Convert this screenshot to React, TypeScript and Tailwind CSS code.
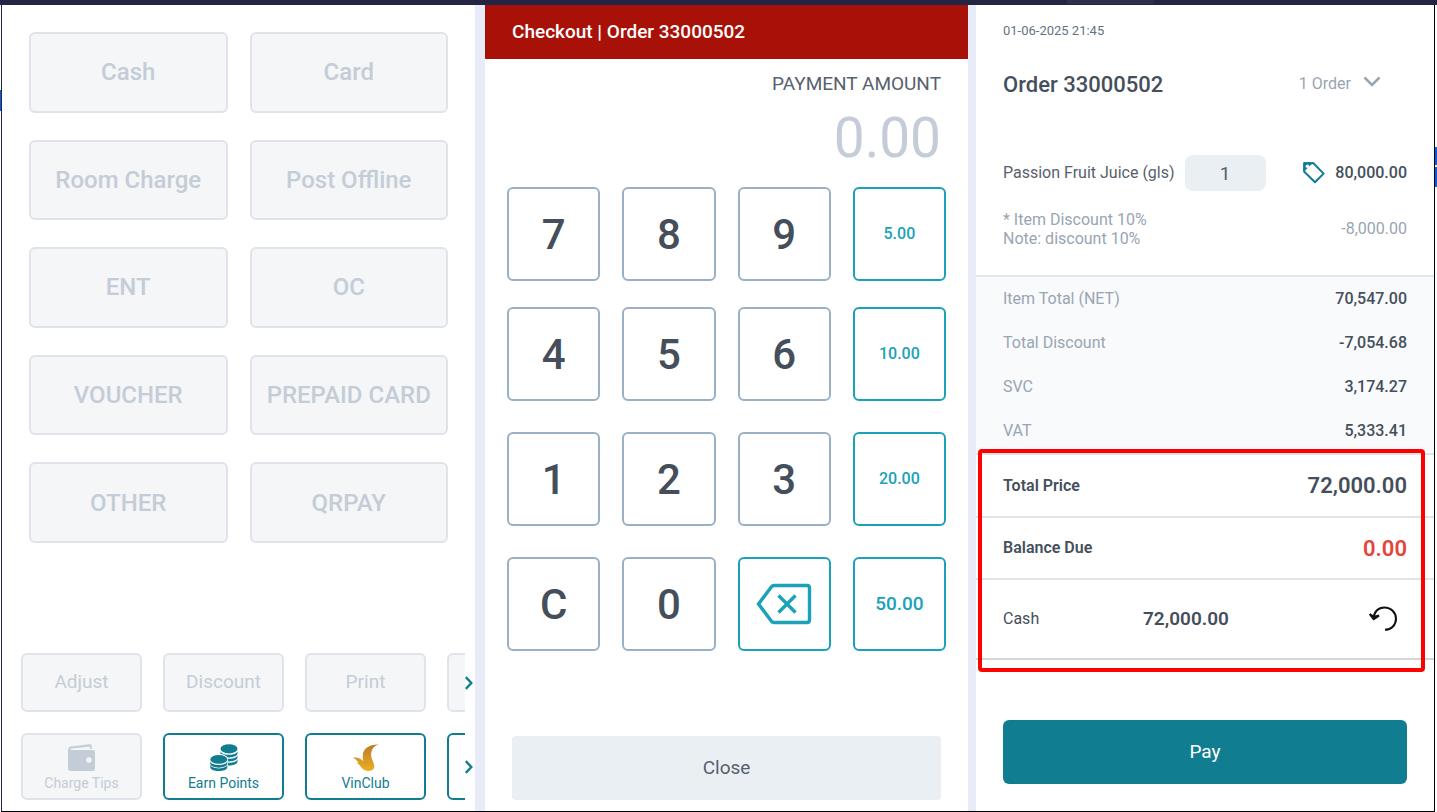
import type { ReactNode } from "react";

const tenders = [
  "Cash", "Card", "Room Charge", "Post Offline", "ENT",
  "OC", "VOUCHER", "PREPAID CARD", "OTHER", "QRPAY",
];

const totals = [
  ["Item Total (NET)", "70,547.00"],
  ["Total Discount", "-7,054.68"],
  ["SVC", "3,174.27"],
  ["VAT", "5,333.41"],
];

function WalletIcon() {
  return (
    <svg width="27" height="27" viewBox="0 0 27 27" fill="currentColor" aria-hidden="true">
      <path d="M0 6.200C0 4.200 1 3 3 2.600L21.200.2C22.800 0 23.700.8 23.700 2.300V5H22V3.900c0-.8-.6-1.200-1.400-1.100L3.500 4.600C2.400 4.800 2.400 6 3.500 6H24.700C26.200 6 27 6.800 27 8.300V24.500C27 26.200 26.200 27 24.500 27H2.800C1 27 0 26 0 24.200Z" />
      <circle cx="20.900" cy="16" r="2.800" fill="#f4f6f8" />
    </svg>
  );
}

function CoinsIcon() {
  const band = (x: number, y: number) => `M${x} ${y}c0 2.300 4 3.800 8.500 3.800s8.500-1.500 8.500-3.800v2.600c0 2.300-4 3.900-8.500 3.900s-8.500-1.600-8.500-3.900Z`;
  return (
    <svg width="28" height="27" viewBox="0 0 28 27" fill="currentColor" aria-hidden="true">
      <ellipse cx="19" cy="4.800" rx="8.500" ry="4.600" />
      <path d={band(10.5, 7)} />
      <path d={band(10.5, 11)} />
      <path d={band(10.5, 15)} />
      <path d="M-.6 15.500C-.6 12 3.500 10 8.800 10s9.200 2 9.200 5.500V28H-.6Z" fill="#fff" />
      <ellipse cx="8.800" cy="15.400" rx="8.500" ry="4.400" />
      <path d={band(0.3, 17.2)} />
      <path d={band(0.3, 20.6)} />
    </svg>
  );
}

function BirdIcon() {
  return (
    <svg width="27" height="27" viewBox="0 0 27 27" aria-hidden="true">
      <defs>
        <linearGradient id="gold" x1="0" y1="0" x2="0" y2="1">
          <stop offset="0" stopColor="#b97a2b" />
          <stop offset="1" stopColor="#efae20" />
        </linearGradient>
      </defs>
      <path fill="url(#gold)" d="M26.500.4C17 .3 11 4.500 10.700 11.500c0 2 .3 3.700.5 5.500C8.500 14.500 5 13.300.8 13.700c3 1 4.300 3.300 6 5.300-.9-.3-1.700-.4-2.600-.2 2.300.8 3.500 2.300 5 4.400 2 2.700 4.600 3.800 7.800 3.700 3.200-.1 5.400-1.700 5.300-4.600-.1-3.500-3.300-7-3.200-12 .1-4.600 2.600-8.300 7.400-9.900Z" />
    </svg>
  );
}

function ChevronRight() {
  return (
    <svg width="8" height="14" viewBox="0 0 8 14" fill="none" stroke="currentColor" strokeWidth="2.400" aria-hidden="true">
      <path d="M.8 1.200 6.300 7 .8 12.800" />
    </svg>
  );
}

function Strip({ label, children }: { label: string; children: ReactNode }) {
  return (
    <div className="flex">
      <div className="flex min-w-0 flex-1 gap-[21px] overflow-hidden">{children}</div>
      <button aria-label={label} className="w-[10px] shrink-0 text-[#117d91]">
        <ChevronRight />
      </button>
    </div>
  );
}

const disabledBox = "rounded-md border-2 border-[#e0e4ea] bg-[#f4f6f8] text-[#c4cdd7]";
const activeBox = "rounded-md border-2 border-[#117d91] bg-white text-[#117d91]";
const iconBox = "flex h-[67px] w-[121px] shrink-0 flex-col items-center justify-center gap-1 pt-[2px] text-sm leading-4";

function Tenders() {
  return (
    <section className="flex min-w-0 flex-col bg-white pt-[27px] pb-[11px]">
      <div className="grid h-[511px] grid-cols-2 grid-rows-5 gap-x-[22px] gap-y-[27px] px-[27px]">
        {tenders.map((name) => (
          <button key={name} disabled className={`${disabledBox} text-2xl font-medium whitespace-nowrap`}>
            {name}
          </button>
        ))}
      </div>
      <div className="mt-auto flex flex-col gap-[21px] pl-[19px]">
        <Strip label="Next actions">
          {["Adjust", "Discount", "Print"].map((name) => (
            <button key={name} disabled className={`${disabledBox} h-[59px] w-[121px] shrink-0 text-[19px]`}>
              {name}
            </button>
          ))}
          <button disabled aria-label="More actions" className={`${disabledBox} h-[59px] w-[121px] shrink-0`} />
        </Strip>
        <Strip label="Next services">
          <button disabled className={`${disabledBox} ${iconBox}`}>
            <WalletIcon />
            Charge Tips
          </button>
          <button className={`${activeBox} ${iconBox}`}>
            <CoinsIcon />
            Earn Points
          </button>
          <button className={`${activeBox} ${iconBox}`}>
            <BirdIcon />
            VinClub
          </button>
          <button aria-label="More services" className={`${activeBox} h-[67px] w-[121px] shrink-0`} />
        </Strip>
      </div>
    </section>
  );
}

function Digit({ children }: { children: string }) {
  return (
    <button className="h-[94px] rounded-md border-2 border-[#9ab1c5] text-[42px] font-medium text-[#454f5b]">
      {children}
    </button>
  );
}

function Amount({ children, large }: { children: ReactNode; large?: boolean }) {
  return (
    <button
      className={`flex h-[94px] items-center justify-center rounded-md border-2 border-[#1ba1b8] font-medium text-[#1ba1b8] ${large ? "text-[19px]" : "text-base"}`}
    >
      {children}
    </button>
  );
}

function Keypad() {
  return (
    <section className="flex min-w-0 flex-col border-r-8 border-l-[10px] border-[#e8ecf8] bg-white pb-[11px]">
      <h1 className="flex h-[54px] items-center bg-[#a81108] px-[27px] text-[19px] font-medium text-white">
        Checkout | Order 33000502
      </h1>
      <label htmlFor="amount" className="mt-3 px-[27px] text-right text-[19px] leading-[26px] text-[#57616d]">
        PAYMENT AMOUNT
      </label>
      <input
        id="amount"
        readOnly
        value="0.00"
        className="mt-2 mb-4 h-[66px] w-full px-[27px] text-right text-[55px] text-[#c4cdd7] outline-none"
      />
      <div className="grid grid-cols-4 gap-x-[22px] px-[22px]">
        <Digit>7</Digit>
        <Digit>8</Digit>
        <Digit>9</Digit>
        <Amount>5.00</Amount>
      </div>
      <div className="mt-[26px] grid grid-cols-4 gap-x-[22px] gap-y-[31px] px-[22px]">
        <Digit>4</Digit>
        <Digit>5</Digit>
        <Digit>6</Digit>
        <Amount>10.00</Amount>
        <Digit>1</Digit>
        <Digit>2</Digit>
        <Digit>3</Digit>
        <Amount>20.00</Amount>
        <Digit>C</Digit>
        <Digit>0</Digit>
        <Amount>
          <svg width="56" height="42" viewBox="0 0 56 42" fill="none" stroke="currentColor" strokeWidth="3.400" role="img" aria-label="Backspace">
            <path d="M18 2.500H51Q53.500 2.500 53.500 5V37Q53.500 39.500 51 39.500H18Q16.500 39.500 15.500 38.300L2.500 21 15.500 3.700Q16.500 2.500 18 2.500Z" />
            <path d="M22.500 12.500 39.500 29.500M39.500 12.500 22.500 29.500" />
          </svg>
        </Amount>
        <Amount large>50.00</Amount>
      </div>
      <button className="mx-[27px] mt-auto h-16 rounded bg-[#eaeff3] text-[19px] text-[#57616d]">Close</button>
    </section>
  );
}

function Receipt() {
  return (
    <section className="flex min-w-0 flex-col bg-white pb-[27px] text-[#454f5b]">
      <p className="mt-4 px-[27px] text-[13px] leading-5 text-[#637381]">01-06-2025 21:45</p>
      <div className="mt-[25px] flex h-9 items-center justify-between px-[27px]">
        <h2 className="text-[22px] font-medium">Order 33000502</h2>
        <button className="mr-[26px] flex items-center gap-3 text-base text-[#98a5b3]">
          1 Order
          <svg width="18" height="12" viewBox="0 0 18 12" fill="none" stroke="currentColor" strokeWidth="2.600" className="mb-1" aria-hidden="true">
            <path d="M1.500 1.500 9 9 16.500 1.500" />
          </svg>
        </button>
      </div>
      <div className="mt-[53px] flex h-9 items-center px-[27px]">
        <label htmlFor="qty" className="text-base whitespace-nowrap text-[#57616d]">Passion Fruit Juice (gls)</label>
        <input id="qty" defaultValue="1" className="ml-[10px] h-9 w-[81px] rounded-lg bg-[#eaeff3] text-center text-[19px] text-[#57616d]" />
        <svg width="22" height="22" viewBox="0 0 22 22" fill="none" stroke="#117d91" strokeWidth="2" className="ml-auto" aria-hidden="true">
          <path d="M1.300 1.300H10.500L20.600 11.600 12 20.300 1.300 9.800Z" strokeLinejoin="round" />
          <path d="M1.300 1.300H8L1.300 7.800Z" fill="#117d91" />
          <circle cx="4.400" cy="4.300" r="1.700" fill="#fff" stroke="none" />
        </svg>
        <span className="ml-[10px] text-base font-medium">80,000.00</span>
      </div>
      <div className="mt-[19px] flex items-center justify-between px-[27px] text-base text-[#98a5b3]">
        <p className="leading-[19px]">
          * Item Discount 10%
          <br />
          Note: discount 10%
        </p>
        <span>-8,000.00</span>
      </div>
      <div className="mt-[27px] border-t-2 border-[#e3e6ea] bg-[#f9fafb]">
        <table className="w-full text-base">
          <tbody>
            {totals.map(([name, value]) => (
              <tr key={name} className="h-11">
                <th className="pl-[27px] text-left font-normal text-[#98a5b3]">{name}</th>
                <td className="pr-[27px] text-right font-medium">{value}</td>
              </tr>
            ))}
          </tbody>
        </table>
      </div>
      <div className="relative">
        <dl>
          <div className="flex h-[65px] items-center justify-between border-t-2 border-b-2 border-[#e0e4e9] px-[27px]">
            <dt className="text-base font-semibold">Total Price</dt>
            <dd className="text-[22px] font-semibold">72,000.00</dd>
          </div>
          <div className="flex h-[62px] items-center justify-between border-b-2 border-[#e0e4e9] px-[27px]">
            <dt className="text-base font-semibold">Balance Due</dt>
            <dd className="text-[22px] font-semibold text-[#e5443d]">0.00</dd>
          </div>
          <div className="flex h-20 items-center border-b-2 border-[#d3d5d8] px-[27px]">
            <dt className="w-[140px] text-base">Cash</dt>
            <dd className="text-[19px] font-semibold">72,000.00</dd>
            <dd className="mr-[9px] ml-auto h-7">
              <button aria-label="Undo payment">
                <svg width="30" height="28" viewBox="0 0 30 28" fill="none" stroke="#111" strokeWidth="2.100">
                  <path d="M5.800 13C6 6.500 10.500 2.500 16.300 2.500 23 2.500 28 7.500 28 13.800S23 24.800 17 24.800" />
                  <path d="M1.800 9 5.700 14 11 10.500 5.900 12Z" fill="#111" />
                </svg>
              </button>
            </dd>
          </div>
        </dl>
        <div className="pointer-events-none absolute -top-1 right-[9px] -bottom-3 left-[2px] rounded-sm border-4 border-[#ff0000]" />
      </div>
      <button className="mx-[27px] mt-auto h-16 rounded-md bg-[#117d91] text-[19px] text-white">Pay</button>
    </section>
  );
}

export default function App() {
  return (
    <div className="flex min-h-screen flex-col bg-white font-[Roboto,sans-serif]">
      <header className="flex h-[5px] bg-[#232542] pl-[1067px]">
        <div className="h-1 w-[87px] bg-[#2e2f4e]" />
      </header>
      <div className="flex flex-1">
        <div className="w-px pt-[85px]">
          <div className="h-[21px] bg-[#0b5cd8]" />
        </div>
        <main className="grid min-w-0 flex-1 grid-cols-[473fr_501fr_458fr] border-r border-b border-l border-black border-l-[#232542]">
          <Tenders />
          <Keypad />
          <Receipt />
        </main>
        <div className="flex w-[2px] flex-col gap-[2px] pt-[142px]">
          <div className="h-[18px] bg-[#0b5cd8]" />
          <div className="h-5 bg-[#0b5cd8]" />
        </div>
      </div>
    </div>
  );
}
